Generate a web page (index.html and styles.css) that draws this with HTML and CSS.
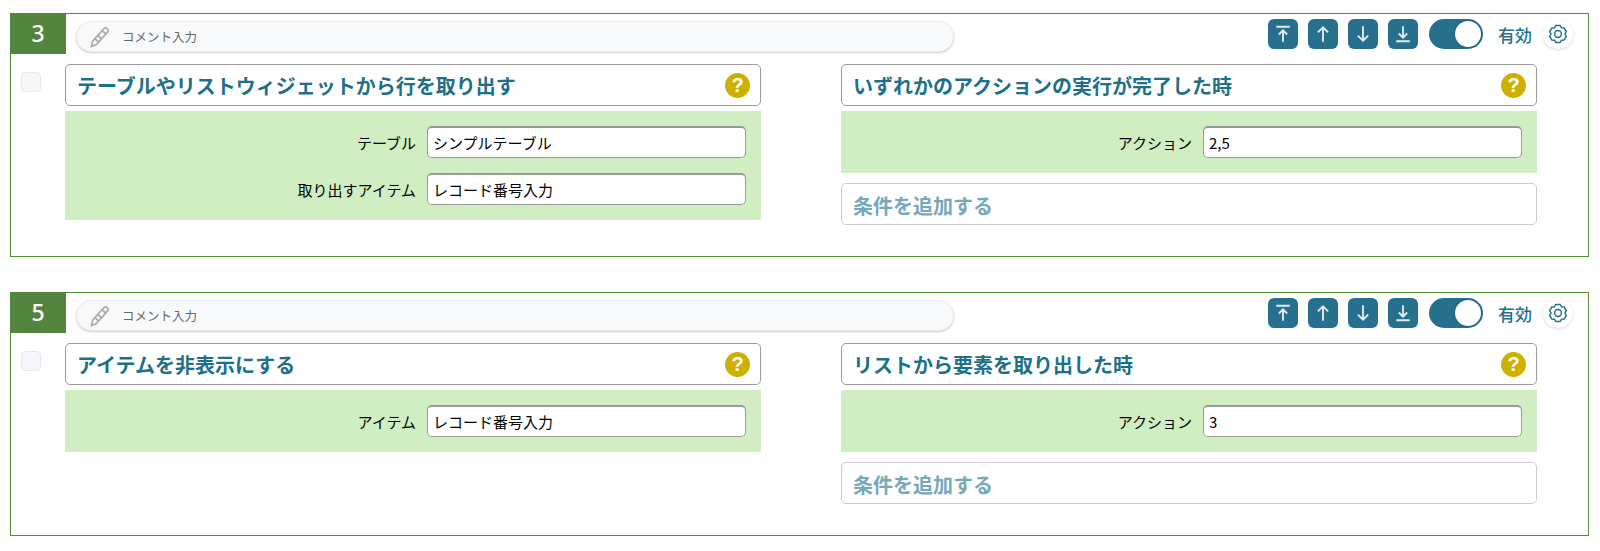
FILE: index.html
```html
<!DOCTYPE html>
<html lang="ja">
<head>
  <meta charset="UTF-8" />
  <title>ルール</title>
  <link rel="stylesheet" href="styles.css">
</head>
<body>

  <svg class="defs" width="0" height="0">
    <symbol id="i-top" viewBox="0 0 29 29"><path d="M8 7.500h13M14.500 22V11.500M10.500 15l4-4 4 4"/></symbol>
    <symbol id="i-up" viewBox="0 0 29 29"><path d="M14.500 22V8M9.500 13l5-5 5 5"/></symbol>
    <symbol id="i-down" viewBox="0 0 29 29"><path d="M14.500 7v14M9.500 16l5 5 5-5"/></symbol>
    <symbol id="i-bottom" viewBox="0 0 29 29"><path d="M8 21.500h13M14.500 7v10.500M10.500 14l4 4 4-4"/></symbol>
    <symbol id="i-gear" viewBox="0 0 24 24"><path d="M9.800 3.500h4.400l1.300 2.300 2.600.1 2.200 3.700-1.300 2.400 1.300 2.400-2.200 3.700-2.600.1-1.300 2.300H9.800l-1.300-2.300-2.600-.1-2.200-3.700 1.300-2.400-1.300-2.400 2.200-3.700 2.600-.1z"/><circle cx="12" cy="12" r="3.400"/></symbol>
    <symbol id="i-pencil" viewBox="0 0 20 20"><path d="M3.500 13.500 13.500 2.500c1-1 2.300-.9 3.200 0s1 2.100.1 3.100L6.500 17l-4.300 1.500zM5.500 11.500l3 3M8 8.500l3 3M12 4.200l3 3"/></symbol>
  </svg>

  <div class="rule">
    <div class="rule-head">
      <div class="rule-no">3</div>
      <div class="comment">
        <svg class="pencil"><use href="#i-pencil"/></svg>
        <span>コメント入力</span>
      </div>
      <div class="tools">
        <button class="tool"><svg><use href="#i-top"/></svg></button>
        <button class="tool"><svg><use href="#i-up"/></svg></button>
        <button class="tool"><svg><use href="#i-down"/></svg></button>
        <button class="tool"><svg><use href="#i-bottom"/></svg></button>
        <div class="toggle"><div class="knob"></div></div>
        <div class="state">有効</div>
        <button class="gear"><svg><use href="#i-gear"/></svg></button>
      </div>
    </div>
    <div class="rule-body">
      <div class="check"></div>
      <div class="col">
        <div class="title">テーブルやリストウィジェットから行を取り出す<span class="help">?</span></div>
        <div class="params">
          <div class="param"><label>テーブル</label><div class="value">シンプルテーブル</div></div>
          <div class="param"><label>取り出すアイテム</label><div class="value">レコード番号入力</div></div>
        </div>
      </div>
      <div class="col">
        <div class="title">いずれかのアクションの実行が完了した時<span class="help">?</span></div>
        <div class="params">
          <div class="param"><label>アクション</label><div class="value">2,5</div></div>
        </div>
        <div class="add">条件を追加する</div>
      </div>
    </div>
  </div>

  <div class="rule">
    <div class="rule-head">
      <div class="rule-no">5</div>
      <div class="comment">
        <svg class="pencil"><use href="#i-pencil"/></svg>
        <span>コメント入力</span>
      </div>
      <div class="tools">
        <button class="tool"><svg><use href="#i-top"/></svg></button>
        <button class="tool"><svg><use href="#i-up"/></svg></button>
        <button class="tool"><svg><use href="#i-down"/></svg></button>
        <button class="tool"><svg><use href="#i-bottom"/></svg></button>
        <div class="toggle"><div class="knob"></div></div>
        <div class="state">有効</div>
        <button class="gear"><svg><use href="#i-gear"/></svg></button>
      </div>
    </div>
    <div class="rule-body">
      <div class="check"></div>
      <div class="col">
        <div class="title">アイテムを非表示にする<span class="help">?</span></div>
        <div class="params">
          <div class="param"><label>アイテム</label><div class="value">レコード番号入力</div></div>
        </div>
      </div>
      <div class="col">
        <div class="title">リストから要素を取り出した時<span class="help">?</span></div>
        <div class="params">
          <div class="param"><label>アクション</label><div class="value">3</div></div>
        </div>
        <div class="add">条件を追加する</div>
      </div>
    </div>
  </div>

</body>
</html>
```

FILE: styles.css
```css
* {
  box-sizing: border-box;
}
body {
  margin: 0;
  padding-top: 13px;
  background-color: white;
  font-family: "Noto Sans CJK JP", "Noto Sans", sans-serif;
  color: #1a1a1a;
}
.defs {
  position: absolute;
}
.rule {
  width: 1579px;
  height: 244px;
  margin: 0 0 35px 10px;
  border: 1px solid #55902f;
}
.rule-head {
  display: flex;
  height: 40px;
  margin: -1px 0 0 -1px;
}
.rule-no {
  width: 56px;
  height: 41px;
  background-color: #53853f;
  color: white;
  font-family: "Noto Sans", sans-serif;
  font-size: 23px;
  font-weight: 500;
  line-height: 41px;
  text-align: center;
}
.comment {
  display: flex;
  align-items: center;
  width: 878px;
  height: 31px;
  margin: 8px 0 0 10px;
  padding-left: 12px;
  background-color: #f8f9fb;
  border: 1px solid #eceef0;
  border-radius: 16px;
  box-shadow: 0 1px 2px rgba(0,0,0,0.2);
  color: #666;
  font-size: 12.500px;
}
.pencil {
  width: 22px;
  height: 22px;
  margin-right: 11px;
  fill: none;
  stroke: #aaa;
  stroke-width: 1.5;
}
.tools {
  display: flex;
  align-items: center;
  height: 30px;
  margin: 6px 0 0 314px;
}
.tool {
  width: 30px;
  height: 30px;
  margin-right: 10px;
  padding: 0;
  background-color: #26708e;
  border: none;
  border-radius: 6px;
}
.tool:nth-child(4) {
  margin-right: 11px;
}
.tool svg {
  display: block;
  width: 30px;
  height: 30px;
  fill: none;
  stroke: #e4eef2;
  stroke-width: 1.8;
}
.toggle {
  display: flex;
  justify-content: flex-end;
  align-items: center;
  width: 54px;
  height: 30px;
  padding-right: 2px;
  background-color: #26708e;
  border-radius: 15px;
}
.knob {
  width: 26px;
  height: 26px;
  background-color: white;
  border-radius: 50%;
  box-shadow: 0 0 2px rgba(0,0,0,0.4);
}
.state {
  width: 34px;
  margin: 0 11px 0 15px;
  color: #26708e;
  font-size: 17px;
  font-weight: 500;
  white-space: nowrap;
}
.gear {
  width: 30px;
  height: 30px;
  padding: 0;
  background-color: white;
  border: none;
  border-radius: 50%;
  box-shadow: 0 1px 3px rgba(0,0,0,0.15);
}
.gear svg {
  display: block;
  width: 24px;
  height: 24px;
  margin: 3px;
  fill: none;
  stroke: #26708e;
  stroke-width: 1.5;
}
.rule-body {
  display: flex;
  align-items: flex-start;
  margin-top: 11px;
}
.check {
  flex: none;
  width: 20px;
  height: 20px;
  margin: 8px 24px 0 10px;
  background-color: #f6f7fa;
  border: 1px solid #e6e8ec;
  border-radius: 4px;
}
.col {
  flex: none;
  width: 696px;
  margin-right: 80px;
}
.title {
  display: flex;
  justify-content: space-between;
  align-items: center;
  height: 42px;
  padding: 0 10px 0 11px;
  background-color: white;
  border: 1px solid #999;
  border-radius: 5px;
  color: #1d7089;
  font-size: 20px;
  font-weight: 700;
}
.help {
  width: 25px;
  height: 25px;
  background-color: #cfb000;
  border-radius: 50%;
  color: white;
  font-family: "Liberation Sans", sans-serif;
  font-size: 20px;
  font-weight: 700;
  line-height: 25px;
  text-align: center;
}
.params {
  display: flex;
  flex-direction: column;
  gap: 15px;
  margin-top: 5px;
  padding: 15px;
  background-color: #d0eec2;
}
.param {
  display: flex;
  justify-content: flex-end;
  align-items: center;
  height: 32px;
}
.param label {
  margin-right: 11px;
  color: black;
  font-size: 15px;
}
.value {
  width: 319px;
  height: 32px;
  padding-left: 5px;
  background-color: white;
  border: 1px solid #999;
  border-top-width: 2px;
  border-radius: 5px;
  color: black;
  font-size: 15px;
  line-height: 29px;
}
.add {
  height: 42px;
  margin-top: 10px;
  padding-left: 11px;
  background-color: white;
  border: 1px solid #ccc;
  border-radius: 5px;
  color: #75a8ba;
  font-size: 20px;
  font-weight: 700;
  line-height: 43px;
}
```
